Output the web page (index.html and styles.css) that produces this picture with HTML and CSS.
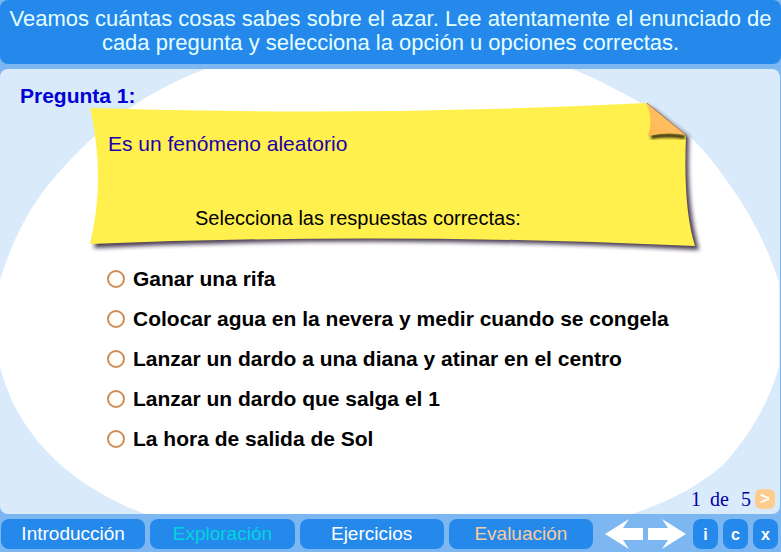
FILE: index.html
```html
<!DOCTYPE html>
<html lang="es">
<head>
<meta charset="utf-8">
<title>El azar - Evaluación</title>
<link rel="stylesheet" href="styles.css">
</head>
<body>
<header class="intro">
  <p>Veamos cuántas cosas sabes sobre el azar. Lee atentamente el enunciado de cada pregunta y selecciona la opción u opciones correctas.</p>
</header>
<main class="panel">
  <svg class="backdrop" viewBox="0 0 780 445" preserveAspectRatio="none" aria-hidden="true">
    <path fill="#fff" d="M205 0C135 27 92 64 49 115C28 141 12 172 0 211V298C6 322 18 347 33 366C60 402 100 428 145 445H632C668 433 699 417 723 396C751 365 768 335 779 298V213C768 180 752 146 729 115C705 79 682 56 645 36C622 24 597 9 572 0Z"/>
  </svg>
  <h1 class="title">Pregunta 1:</h1>
  <section class="note">
    <svg class="paper" viewBox="0 0 612 150" preserveAspectRatio="none" aria-hidden="true">
      <defs>
        <filter id="soft" x="-5%" y="-15%" width="110%" height="130%"><feGaussianBlur stdDeviation="2"/></filter>
        <filter id="fold" x="-20%" y="-150%" width="140%" height="400%"><feGaussianBlur stdDeviation="1.5"/></filter>
        <linearGradient id="flap" x1="0" y1="1" x2="1" y2="0"><stop offset="0" stop-color="#ffb84f"/><stop offset="1" stop-color="#ffc473"/></linearGradient>
      </defs>
      <path filter="url(#soft)" fill="#2b1a35" opacity=".85" d="M20 12Q20 80 6 145Q300 131 611 147Q598 100 601 34L564 5Q300 20 20 12Z"/>
      <path fill="#fff04d" d="M2 5Q280 14 558 0L598 33Q595 105 607 143Q300 129 2 141Q18 75 2 5Z"/>
      <path filter="url(#fold)" stroke="#2b2010" stroke-width="4" fill="none" d="M563 34Q580 31 597 34"/>
      <path fill="url(#flap)" d="M558 0L598 32Q580 28 560 33Q566 16 558 0Z"/>
      <path stroke="#a97a52" fill="none" d="M559 0L598 32"/>
    </svg>
    <p class="question">Es un fenómeno aleatorio</p>
    <p class="hint">Selecciona las respuestas correctas:</p>
  </section>
  <form class="answers">
    <label><input type="checkbox">Ganar una rifa</label>
    <label><input type="checkbox">Colocar agua en la nevera y medir cuando se congela</label>
    <label><input type="checkbox">Lanzar un dardo a una diana y atinar en el centro</label>
    <label><input type="checkbox">Lanzar un dardo que salga el 1</label>
    <label><input type="checkbox">La hora de salida de Sol</label>
  </form>
  <div class="pager">
    <span>1</span><span>de</span><span class="total">5</span>
    <button class="next" type="button" aria-label="Siguiente pregunta">&gt;</button>
  </div>
</main>
<nav class="bar">
  <div class="tabs">
    <button type="button">Introducción</button>
    <button type="button" class="explore">Exploración</button>
    <button type="button">Ejercicios</button>
    <button type="button" class="current">Evaluación</button>
  </div>
  <div class="arrows">
    <button type="button" aria-label="Anterior"><svg viewBox="0 0 38 30"><path fill="#fff" d="M0 15L24 0L18 9H38V21H18L24 30Z"/></svg></button>
    <button type="button" aria-label="Siguiente"><svg viewBox="0 0 38 30"><path fill="#fff" d="M38 15L14 0L20 9H0V21H20L14 30Z"/></svg></button>
  </div>
  <div class="tools">
    <button type="button">i</button>
    <button type="button">c</button>
    <button type="button">x</button>
  </div>
</nav>
</body>
</html>
```
FILE: styles.css
```css
* { box-sizing: border-box; }

html { height: 100%; }

body {
  margin: 0;
  min-height: 100%;
  display: flex;
  flex-direction: column;
  gap: 5px;
  padding-bottom: 3px;
  background: #7db7f2;
  font-family: "Liberation Sans", Arial, sans-serif;
}

p, h1 { margin: 0; }

button {
  border: 0;
  padding: 0;
  background: none;
  color: #fff;
  font-family: inherit;
  cursor: pointer;
}

.intro {
  padding: 7px 4px 9px;
  border-radius: 8px;
  background: #2589ec;
  color: #e4ffff;
  font-size: 22px;
  line-height: 24px;
  text-align: center;
}

.panel {
  position: relative;
  flex: 1;
  display: flex;
  flex-direction: column;
  margin-right: 1px;
  border-radius: 8px;
  overflow: hidden;
  background: #d9eafa;
}

.backdrop, .paper {
  position: absolute;
  inset: 0;
  width: 100%;
  height: 100%;
}

.paper { overflow: visible; }

.title {
  position: relative;
  padding: 15px 20px 0;
  height: 34px;
  color: #0000d8;
  font-size: 21px;
  line-height: 24px;
}

.note {
  position: relative;
  margin: 0 80px 0 88px;
  padding: 29px 20px 23px;
  height: 150px;
  display: flex;
  flex-direction: column;
  justify-content: space-between;
  line-height: 24px;
}

.question, .hint { position: relative; }

.question {
  color: #1c00b0;
  font-size: 21px;
}

.hint {
  padding-left: 87px;
  font-size: 20px;
}

.answers {
  position: relative;
  display: flex;
  flex-direction: column;
  padding: 6px 20px 0 107px;
}

.answers label {
  display: flex;
  align-items: center;
  gap: 8px;
  min-height: 40px;
  font-size: 21px;
  font-weight: bold;
}

.answers input {
  appearance: none;
  flex: none;
  width: 18px;
  height: 18px;
  margin: 0;
  border: 2px solid #cd8d55;
  border-radius: 50%;
  background: #fffefa;
}

.answers input:checked { background: #cd8d55; }

.pager {
  position: relative;
  display: flex;
  justify-content: flex-end;
  align-items: center;
  gap: 9px;
  margin-top: auto;
  padding: 0 5px 4px;
  color: #0000a8;
  font-family: "Liberation Serif", "Times New Roman", serif;
  font-size: 20px;
  line-height: 22px;
}

.total { margin-right: -5px; padding-left: 3px; }

.next {
  width: 20px;
  height: 20px;
  border-radius: 6px;
  background: #ffcc8f;
  font: bold 17px/20px "Liberation Sans", Arial, sans-serif;
}

.bar {
  display: flex;
  height: 30px;
  padding: 0 3px 0 1px;
}

.tabs {
  flex: 1;
  display: grid;
  grid-template-columns: repeat(4, 1fr);
  gap: 5px;
}

.tabs button, .tools button {
  border-radius: 8px;
  background: #2589ec;
}

.tabs button { font-size: 19px; }
.tabs .explore { color: #00d5df; }
.tabs .current { color: #f7cc9e; }

.arrows {
  display: flex;
  gap: 5px;
  padding: 0 7px 0 12px;
}

.arrows svg {
  display: block;
  width: 38px;
  height: 30px;
}

.tools { display: flex; gap: 5px; }

.tools button {
  width: 25px;
  padding-top: 2px;
  font-size: 16px;
  font-weight: bold;
}
```
